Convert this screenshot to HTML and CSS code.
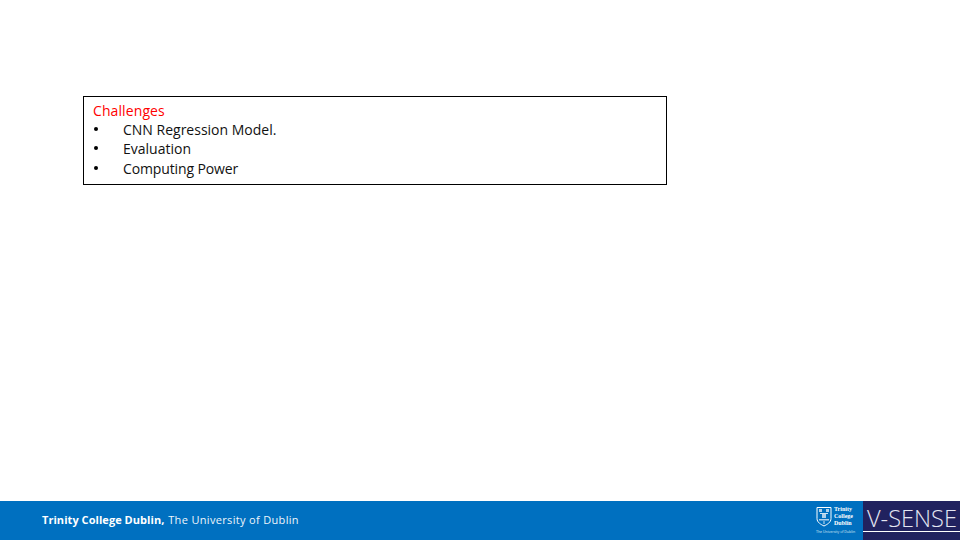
FILE: index.html
```
<!DOCTYPE html>
<html lang="en">
<head>
<meta charset="utf-8">
<title>Challenges</title>
<link rel="stylesheet" href="styles.css">
</head>
<body>
<main class="content">
  <section class="box">
    <div class="heading">Challenges</div>
    <ul class="list">
      <li class="item"><span class="bullet"></span><span>CNN Regression Model.</span></li>
      <li class="item"><span class="bullet"></span><span>Evaluation</span></li>
      <li class="item"><span class="bullet"></span><span class="tight">Computing Power</span></li>
    </ul>
  </section>
</main>
<footer class="footer">
  <div class="credit"><b class="strong">Trinity College Dublin,</b> <span class="uni">The University of Dublin</span></div>
  <div class="logos">
    <div class="tcd">
      <div class="tcd-row">
        <svg class="crest" width="16" height="21" viewBox="0 0 16 21">
          <path d="M1 1.5H15V12.5C15 16.5 11 18.5 8 20C5 18.5 1 16.5 1 12.5Z" fill="none" stroke="#fff" stroke-width="1"/>
          <path d="M3 3H6V6H3ZM10 3H13V6H10ZM6 8H10V12H6ZM3 13H13V14.5H3Z" fill="#dbe9f5" opacity="0.8"/>
          <path d="M4 7.5H12M8 15V18" stroke="#fff" stroke-width="0.8"/>
        </svg>
        <div class="tcd-name">Trinity<br>College<br>Dublin</div>
      </div>
      <div class="tcd-sub">The University of Dublin</div>
    </div>
    <div class="vsense">
      <div class="vsense-text">V-SENSE</div>
      <div class="vsense-line"></div>
    </div>
  </div>
</footer>
</body>
</html>
```

FILE: styles.css
```
* { box-sizing: border-box; }
html, body { margin: 0; padding: 0; }
body {
  width: 960px;
  height: 540px;
  background: #fff;
  display: flex;
  flex-direction: column;
  font-family: "Open Sans", "Liberation Sans", sans-serif;
  overflow: hidden;
}
.content { flex: 1; padding: 96px 0 0 83px; }
.box {
  width: 584px;
  height: 89px;
  border: 1px solid #000;
  padding: 3.6px 0 0 9px;
  font-size: 14px;
  line-height: 19.4px;
  color: #111;
}
.heading { color: #f00; letter-spacing: 0.1px; }
.list { list-style: none; margin: 0; padding: 0; }
.item { display: flex; align-items: center; }
.tight { letter-spacing: -0.13px; }
.bullet { width: 30px; display: flex; padding: 0 0 2px 1px; }
.bullet::before {
  content: "";
  width: 4px;
  height: 4px;
  border-radius: 50%;
  background: #000;
}
.footer {
  height: 39px;
  background: #0070c0;
  display: flex;
  justify-content: space-between;
  align-items: stretch;
  color: #fff;
  font-size: 11px;
}
.credit { padding: 11px 0 0 42px; line-height: 15px; }
.strong { font-weight: 700; letter-spacing: 0.05px; }
.uni { margin-left: 1px; color: #eef5fb; letter-spacing: 0.33px; }
.logos { display: flex; }
.tcd { width: 47px; padding-top: 5px; }
.tcd-row { display: flex; gap: 2px; }
.tcd-name {
  font-family: "Liberation Serif", serif;
  font-weight: 700;
  font-size: 6px;
  line-height: 7px;
}
.tcd-sub { font-size: 3.5px; line-height: 5px; margin-top: 2px; white-space: nowrap; color: #dbe9f5; }
.vsense { width: 97px; background: #21225f; padding-top: 4px; }
.vsense-text {
  font-family: "Open Sans", sans-serif;
  font-weight: 300;
  font-size: 23.6px;
  line-height: 26px;
  padding-left: 4px;
  color: #e4e6f2;
  white-space: nowrap;
}
.vsense-line { height: 1px; background: #fff; }
```
